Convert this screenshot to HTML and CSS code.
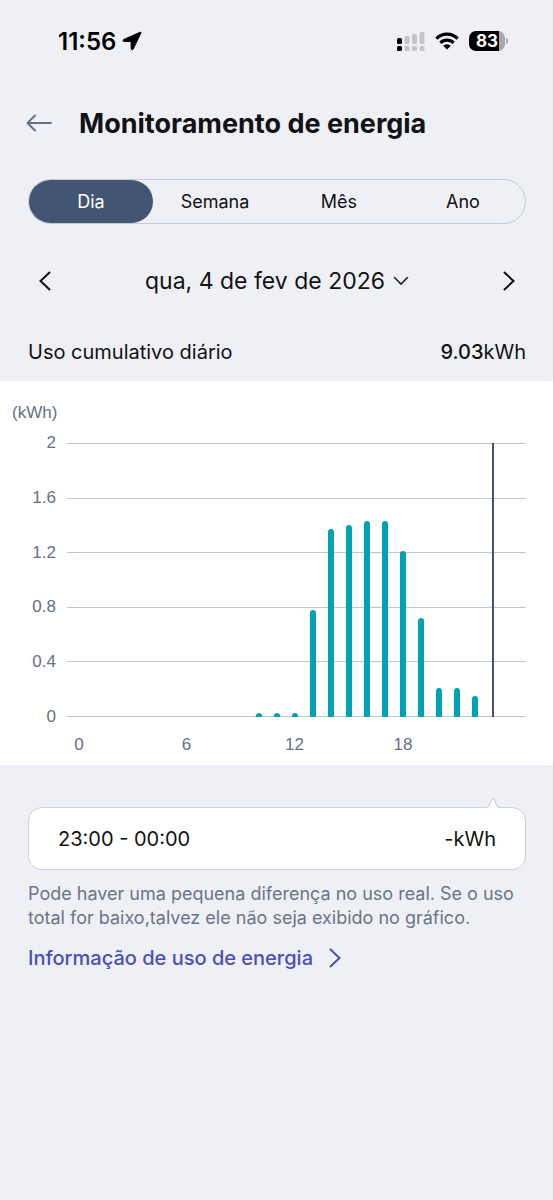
FILE: index.html
```html
<!DOCTYPE html>
<html lang="pt-BR">
<head>
<meta charset="utf-8">
<meta name="viewport" content="width=device-width, initial-scale=1">
<title>Monitoramento de energia</title>
<link rel="stylesheet" href="styles.css">
</head>
<body>
<div class="screen">
  <div class="status">
    <div class="status-time">
      <span>11:56</span>
      <svg width="20" height="20" viewBox="0 0 20 20" aria-hidden="true"><path d="M18.200 1.200 1.600 8.600c-.9.5-.7 1.800.4 1.800l7 .2.200 7.200c0 1.100 1.400 1.300 1.900.4L18.900 2c.3-.6-.2-1-.7-.8z" fill="#000" stroke="#000" stroke-width="1" stroke-linejoin="round"/></svg>
    </div>
    <div class="status-icons">
      <svg width="29" height="20" viewBox="0 0 29 20" aria-hidden="true">
        <g fill="#000"><rect x="1" y="7" width="5" height="6" rx="1.500"/><rect x="1" y="15" width="5" height="5" rx="1.500"/></g>
        <g fill="#c4c4c8"><rect x="8.500" y="5" width="5" height="8" rx="1.500"/><rect x="16" y="3" width="5" height="10" rx="1.500"/><rect x="23.500" y="1" width="5" height="12" rx="1.500"/><rect x="8.500" y="15" width="5" height="5" rx="1.500"/><rect x="16" y="15" width="5" height="5" rx="1.500"/><rect x="23.500" y="15" width="5" height="5" rx="1.500"/></g>
      </svg>
      <svg width="24" height="18" viewBox="0 0 24 18" aria-hidden="true"><g fill="none" stroke="#000" stroke-width="3.200"><path d="M1.400 6.600a15 15 0 0 1 21.200 0"/><path d="M5.400 10.800a9.300 9.300 0 0 1 13.200 0"/></g><path d="M12 17.600 8.200 13.800a5.400 5.400 0 0 1 7.600 0z" fill="#000"/></svg>
      <div class="battery"><span class="battery-level">83</span><span class="battery-tip"></span></div>
    </div>
  </div>

  <header class="header">
    <button class="icon-button" type="button" aria-label="Voltar"><svg width="26" height="18" viewBox="0 0 26 18"><path d="M25 9H1.500M9 1.500 1.500 9 9 16.500" fill="none" stroke="#667085" stroke-width="2" stroke-linecap="round" stroke-linejoin="round"/></svg></button>
    <h1 class="title">Monitoramento de energia</h1>
  </header>

  <div class="tabs" role="tablist">
    <button class="tab tab-active" type="button" role="tab" aria-selected="true">Dia</button>
    <button class="tab" type="button" role="tab" aria-selected="false">Semana</button>
    <button class="tab" type="button" role="tab" aria-selected="false">Mês</button>
    <button class="tab" type="button" role="tab" aria-selected="false">Ano</button>
  </div>

  <div class="date-row">
    <button class="icon-button" type="button" aria-label="Dia anterior"><svg width="12" height="20" viewBox="0 0 12 20"><path d="M10.500 1.500 1.500 10l9 8.500" fill="none" stroke="#111" stroke-width="2" stroke-linecap="round"/></svg></button>
    <button class="date" type="button">qua, 4 de fev de 2026 <svg width="16" height="10" viewBox="0 0 16 10"><path d="M1.500 1.500 8 8l6.500-6.500" fill="none" stroke="#222" stroke-width="1.600" stroke-linecap="round"/></svg></button>
    <button class="icon-button" type="button" aria-label="Próximo dia"><svg width="12" height="20" viewBox="0 0 12 20"><path d="m1.500 1.500 9 8.500-9 8.500" fill="none" stroke="#111" stroke-width="2" stroke-linecap="round"/></svg></button>
  </div>

  <div class="summary"><span>Uso cumulativo diário</span><span><b class="value">9.03</b>kWh</span></div>

  <section class="chart">
    <div class="unit">(kWh)</div>
    <div class="y-axis"><span>2</span><span>1.6</span><span>1.2</span><span>0.8</span><span>0.4</span><span>0</span></div>
    <div class="plot">
      <div class="lines"><i></i><i></i><i></i><i></i><i></i><i></i></div>
      <div class="bars">
        <i></i><i></i><i></i><i></i><i></i><i></i><i></i><i></i><i></i><i></i>
        <i class="bar" style="height:1.5%"></i>
        <i class="bar" style="height:1.5%"></i>
        <i class="bar" style="height:1.5%"></i>
        <i class="bar" style="height:39%"></i>
        <i class="bar" style="height:68.5%"></i>
        <i class="bar" style="height:70%"></i>
        <i class="bar" style="height:71.5%"></i>
        <i class="bar" style="height:71.5%"></i>
        <i class="bar" style="height:60.5%"></i>
        <i class="bar" style="height:36%"></i>
        <i class="bar" style="height:10.5%"></i>
        <i class="bar" style="height:10.5%"></i>
        <i class="bar" style="height:7.5%"></i>
        <i class="cursor"></i>
      </div>
    </div>
    <div class="x-axis">
      <span>0</span><i></i><i></i><i></i><i></i><i></i>
      <span>6</span><i></i><i></i><i></i><i></i><i></i>
      <span>12</span><i></i><i></i><i></i><i></i><i></i>
      <span>18</span><i></i><i></i><i></i><i></i><i></i>
    </div>
  </section>

  <div class="detail">
    <span>23:00 - 00:00</span><span>-kWh</span>
    <svg class="pointer" width="14" height="11" viewBox="0 0 14 11" aria-hidden="true"><path d="M0 9.500Q2 9.500 3 7.500L6 1.500Q7 0 8 1.500l3 6Q12 9.500 14 9.500V11H0z" fill="#fff"/><path d="M0 9.500Q2 9.500 3 7.500L6 1.500Q7 0 8 1.500l3 6Q12 9.500 14 9.500" fill="none" stroke="#cfd1dc" stroke-width="1.300"/></svg>
  </div>
  <p class="note">Pode haver uma pequena diferença no uso real. Se o uso total for baixo,talvez ele não seja exibido no gráfico.</p>
  <a class="link" href="#">Informação de uso de energia <svg width="12" height="20" viewBox="0 0 12 20" aria-hidden="true"><path d="m1.500 1.500 9 8.500-9 8.500" fill="none" stroke="#4a4fb8" stroke-width="2" stroke-linecap="round"/></svg></a>
</div>
</body>
</html>
```
FILE: styles.css
```css
* { box-sizing: border-box; }
body {
  margin: 0;
  background: #eff0f5;
  color: #111214;
  font-family: Inter, "Noto Sans", sans-serif;
  font-size: 20px;
}
button { padding: 0; border: 0; background: none; color: inherit; font: inherit; }
svg { display: block; flex: none; }
.screen { min-height: 100vh; }
.screen, .chart { box-shadow: inset -1px 0 #cdced3; }
.status {
  display: flex;
  align-items: center;
  justify-content: space-between;
  height: 82px;
  padding: 0 46px 0 58px;
  color: #000;
}
.status-time { display: flex; align-items: center; gap: 6px; font-size: 24px; font-weight: 600; }
.status-icons { display: flex; align-items: center; gap: 10px; }
.battery { display: flex; align-items: center; gap: 1px; }
.battery-level {
  width: 36px;
  border-radius: 7px;
  background: linear-gradient(90deg, #000 83%, #a8a8ac 83%);
  color: #fff;
  font-size: 17px;
  font-weight: 700;
  line-height: 20px;
  text-align: center;
}
.battery-tip { width: 2px; height: 6px; border-radius: 0 2px 2px 0; background: #a8a8ac; }
.header { display: flex; align-items: center; gap: 27px; height: 82px; padding: 0 26px; }
.title { margin: 0; font-size: 27px; font-weight: 700; }
.tabs {
  display: flex;
  margin: 15px 28px 0;
  border: 1px solid #c5c9d8;
  border-radius: 23px;
}
.tab { flex: 1; height: 43px; border-radius: 22px; font-size: 18px; }
.tab-active { background: #425573; color: #fff; }
.date-row { display: flex; align-items: center; justify-content: space-between; height: 114px; padding: 0 39px; }
.date { display: flex; align-items: center; gap: 8px; font-size: 23px; }
.summary { display: flex; justify-content: space-between; padding: 0 28px; line-height: 28px; }
.value { font-weight: 500; }
.chart {
  display: grid;
  grid-template-columns: 56px 1fr;
  column-gap: 11px;
  margin-top: 15px;
  padding: 20px 28px 8px 0;
  background: #fff;
  color: #667085;
  font: 17px/24px "Liberation Sans", sans-serif;
}
.unit { grid-column: 1 / -1; padding-left: 12px; }
.y-axis { display: flex; flex-direction: column; justify-content: space-between; margin-top: 6px; height: 298px; text-align: right; }
.plot { display: grid; height: 274px; margin-top: 18px; }
.lines, .bars { grid-area: 1 / 1; }
.lines { display: flex; flex-direction: column; justify-content: space-between; }
.lines i { height: 1px; background: #c1c6d4; }
.bars, .x-axis { display: grid; grid-template-columns: repeat(24, 1fr); padding: 0 24px 0 3px; }
.bars { align-items: end; justify-items: center; }
.bar { width: 6px; border-radius: 3px 3px 0 0; background: #00a2b5; }
.cursor { width: 2px; height: 100%; background: #454e78; }
.x-axis { grid-column: 2; margin-top: 4px; line-height: 24px; }
.x-axis span { display: flex; justify-content: center; }
.detail {
  position: relative;
  display: flex;
  align-items: center;
  justify-content: space-between;
  height: 63px;
  margin: 42px 28px 0;
  padding: 0 29px;
  border: 1px solid #cfd1dc;
  border-radius: 14px;
  background: #fff;
}
.pointer { position: absolute; top: -10px; right: 25px; }
.note { margin: 12px 28px 0; color: #6b7487; font-size: 18px; line-height: 24px; }
.link { display: inline-flex; align-items: center; gap: 16px; margin: 14px 28px 0; color: #4a4fb8; font-size: 20px; font-weight: 500; line-height: 28px; text-decoration: none; }
```
